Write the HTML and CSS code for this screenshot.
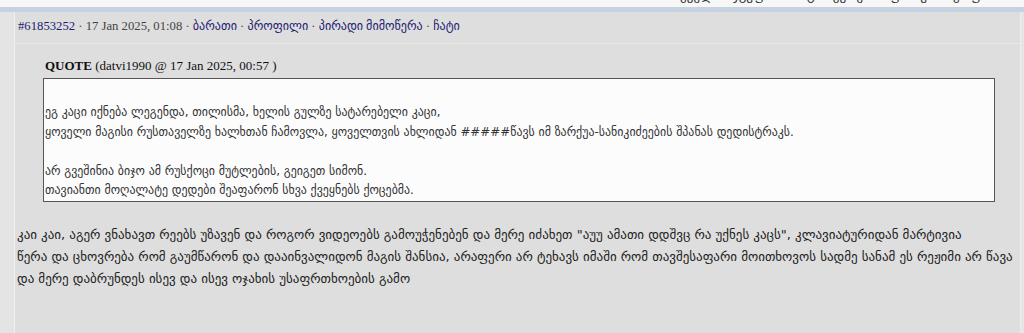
FILE: index.html
```html
<!DOCTYPE html>
<html lang="ka">
<head>
    <meta charset="UTF-8">
    <title>პოსტი</title>
    <link rel="stylesheet" href="styles.css">
</head>
<body>
    <div class="top-strip">
        <div class="top-links">ყველა · ჯგუფი · პოსტის ყურება · ფორუმი · ყოფნა</div>
    </div>
    <div class="blue-bar"></div>
    <div class="post">
        <div class="post-side"></div>
        <div class="post-main">
            <div class="post-head">
                <a href="#" class="post-id">#61853252</a> · 17 Jan 2025, 01:08 ·
                <a href="#">ბარათი</a> · <a href="#">პროფილი</a> · <a href="#">პირადი მიმოწერა</a> · <a href="#">ჩატი</a>
            </div>
            <div class="post-body">
                <div class="quote-top"><b>QUOTE</b> (datvi1990 @ 17 Jan 2025, 00:57 )</div>
                <div class="quote-main">
                    <br>
                    ეგ კაცი იქნება ლეგენდა, თილისმა, ხელის გულზე სატარებელი კაცი,<br>
                    ყოველი მაგისი რუსთაველზე ხალხთან ჩამოვლა, ყოველთვის ახლიდან #####წავს იმ ზარქუა-სანიკიძეების შპანას დედისტრაკს.<br>
                    <br>
                    არ გვეშინია ბიჯო ამ რუსქოცი მუტლების, გეიგეთ სიმონ.<br>
                    თავიანთი მოღალატე დედები შეაფარონ სხვა ქვეყნებს ქოცებმა.
                </div>
                <p class="post-text">კაი კაი, აგერ ვნახავთ რეებს უზავენ და როგორ ვიდეოებს გამოუჭენებენ და მერე იძახეთ "აუუ ამათი დდშვც რა უქნეს კაცს", კლავიატურიდან მარტივია<br>წერა და ცხოვრება რომ გაუმწარონ და დააინვალიდონ მაგის შანსია, არაფერი არ ტეხავს იმაში რომ თავშესაფარი მოითხოვოს სადმე სანამ ეს რეჟიმი არ წავა და მერე დაბრუნდეს ისევ და ისევ ოჯახის უსაფრთხოების გამო</p>
            </div>
        </div>
    </div>
</body>
</html>
```

FILE: styles.css
```css
body {
    margin: 0;
    padding: 0;
    background: #e6e6e6;
    font-family: 'Liberation Serif', 'DejaVu Sans', serif;
    color: #222;
    overflow: hidden;
}
a {
    color: #1c1c70;
    text-decoration: none;
}
.top-strip {
    height: 7px;
    overflow: hidden;
    background: #f7f7f7;
}
.top-links {
    text-align: right;
    padding-right: 30px;
    font-size: 13px;
    line-height: 14px;
    margin-top: -11px;
    color: #333;
    font-family: 'DejaVu Sans', sans-serif;
}
.blue-bar {
    height: 5px;
    background: #c6d2df;
}
.post {
    display: flex;
    height: 321px;
}
.post-side {
    width: 14px;
    background: #e4e4e4;
    border-right: 1px solid #f0f0f0;
}
.post-main {
    width: 1005px;
    background: #dedede;
    border-right: 1px solid #ececec;
}
.post-head {
    height: 31px;
    line-height: 29px;
    padding-left: 3px;
    font-size: 12.7px;
    color: #444;
    border-bottom: 1px solid #e9e9e9;
}
.post-head a {
    font-size: 12.1px;
}
.post-head a.post-id {
    font-size: 12.7px;
}
.post-body {
    padding: 14px 0 0 2px;
}
.quote-top {
    margin-left: 28px;
    font-size: 13px;
    line-height: 16px;
    color: #111;
}
.quote-main {
    margin: 4px 25px 0 26px;
    background: #fcfcfd;
    border: 1px solid #555;
    font-family: 'DejaVu Sans', sans-serif;
    font-size: 11.9px;
    line-height: 19.4px;
    color: #333;
    padding: 5px 1px 1px 1px;
}
.post-text {
    margin: 22px 0 0 0;
    font-family: 'DejaVu Sans', sans-serif;
    font-size: 13px;
    line-height: 22px;
    color: #222;
}
```
